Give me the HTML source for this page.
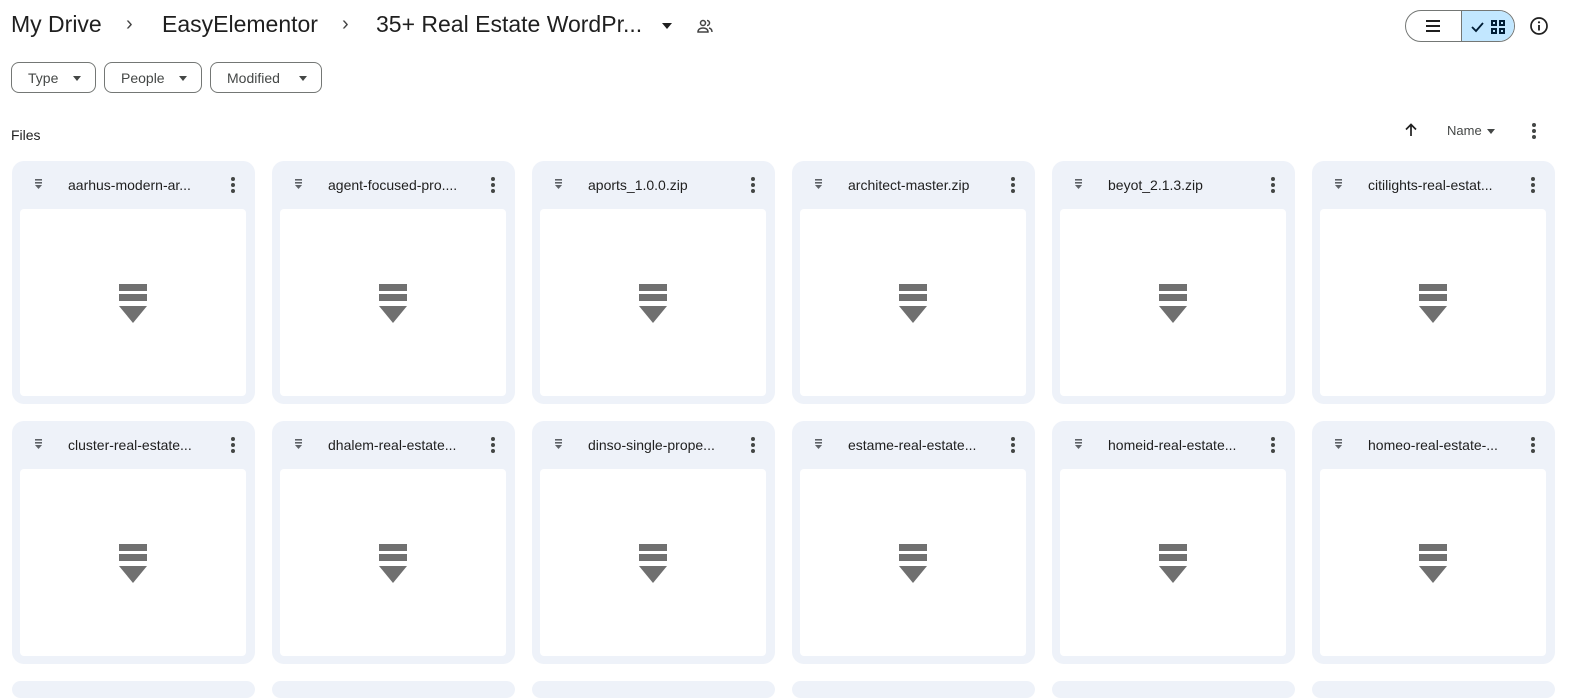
<!DOCTYPE html>
<html><head><meta charset="utf-8"><style>
*{margin:0;padding:0;box-sizing:border-box}
html,body{width:1581px;height:698px;overflow:hidden}
body{background:#fff;font-family:"Liberation Sans",sans-serif;color:#1f1f1f;position:relative}
.abs{position:absolute}
.bc{position:absolute;top:11px;font-size:23px;color:#1f1f1f;white-space:nowrap}
.chip{position:absolute;top:62px;height:31px;border:1px solid #747775;border-radius:8px;font-size:14px;color:#444746;display:flex;align-items:center;padding-left:16px}
.chip:after{content:"";position:absolute;right:14px;top:13px;border:4px solid transparent;border-top:5px solid #444746}
.card{position:absolute;width:243px;height:243px;background:#eef2f9;border-radius:12px}
.card .t{position:absolute;left:56px;top:16px;font-size:14px;color:#1f1f1f;white-space:nowrap}
.card .s{position:absolute;left:23px;top:18px;width:7px}
.card .m{position:absolute;right:20px;top:16px;width:4px}
.card .w{position:absolute;left:8px;top:48px;width:226px;height:187px;background:#fff;border-radius:4px}
.dot{width:4px;height:4px;border-radius:50%;background:#444746;margin-bottom:2px}
</style></head><body>
<div class="bc" style="left:11px">My Drive</div>
<div class="bc" style="left:126px;font-size:20px;top:13px;color:#444">›</div>
<div class="bc" style="left:162px">EasyElementor</div>
<div class="bc" style="left:342px;font-size:20px;top:13px;color:#444">›</div>
<div class="bc" style="left:376px">35+ Real Estate WordPr...</div>
<div class="abs" style="left:662px;top:23px;border:5px solid transparent;border-top:6px solid #1f1f1f"></div>
<svg class="abs" style="left:696px;top:17px" width="18" height="18" viewBox="0 0 18 18" fill="none" stroke="#444" stroke-width="1.5"><circle cx="7" cy="6" r="2.5"/><path d="M2 15c0-3 2.5-4 5-4s5 1 5 4z"/><path d="M11 3.5a2.5 2.5 0 010 5M13 11c2 .5 3 1.5 3 4"/></svg>
<div class="abs" style="left:1405px;top:10px;width:110px;height:32px;border:1px solid #747775;border-radius:16px;overflow:hidden">
<div class="abs" style="left:55px;top:0;width:55px;height:32px;background:#c2e7ff;border-left:1px solid #747775"></div>
<div class="abs" style="left:20px;top:9px;width:14px;height:2px;background:#1f1f1f;box-shadow:0 5px 0 #1f1f1f,0 10px 0 #1f1f1f"></div>
<svg class="abs" style="left:64px;top:8px" width="40" height="16" viewBox="0 0 40 16"><path d="M2 8l4 4 7-8" stroke="#001d35" stroke-width="1.8" fill="none"/><g fill="none" stroke="#001d35" stroke-width="2"><rect x="22" y="2" width="4" height="4"/><rect x="30" y="2" width="4" height="4"/><rect x="22" y="10" width="4" height="4"/><rect x="30" y="10" width="4" height="4"/></g></svg>
</div>
<svg class="abs" style="left:1529px;top:16px" width="20" height="20" viewBox="0 0 20 20"><circle cx="10" cy="10" r="8" fill="none" stroke="#1f1f1f" stroke-width="1.7"/><rect x="9.1" y="9" width="1.8" height="5.5" fill="#1f1f1f"/><circle cx="10" cy="6.3" r="1.1" fill="#1f1f1f"/></svg>
<div class="chip" style="left:11px;width:85px">Type</div>
<div class="chip" style="left:104px;width:98px">People</div>
<div class="chip" style="left:210px;width:112px">Modified</div>
<div class="abs" style="left:11px;top:127px;font-size:14px">Files</div>
<svg class="abs" style="left:1403px;top:122px" width="16" height="16" viewBox="0 0 16 16"><path d="M8 14V3M3 7.5L8 2.5l5 5" stroke="#1f1f1f" stroke-width="1.7" fill="none"/></svg>
<div class="abs" style="left:1447px;top:123px;font-size:13px;color:#444746">Name</div>
<div class="abs" style="left:1487px;top:129px;border:4.5px solid transparent;border-top:5px solid #444746"></div>
<div class="abs" style="left:1532px;top:123px"><div class="dot"></div><div class="dot"></div><div class="dot"></div></div>
<div id="g"></div>
<script>
var n=["aarhus-modern-ar...","agent-focused-pro....","aports_1.0.0.zip","architect-master.zip","beyot_2.1.3.zip","citilights-real-estat...","cluster-real-estate...","dhalem-real-estate...","dinso-single-prope...","estame-real-estate...","homeid-real-estate...","homeo-real-estate-..."];
var h="";
for(var r=0;r<3;r++)for(var c=0;c<6;c++){var i=r*6+c;var x=12+c*260,y=161+r*260;
h+='<div class="card" style="left:'+x+'px;top:'+y+'px;'+(r==2?'height:17px':'')+'">'+(r==2?'':
'<svg class="s" height="10" viewBox="0 0 7 10"><rect width="7" height="1.6" fill="#5f6368"/><rect y="3" width="7" height="1.6" fill="#5f6368"/><path d="M0 6h7l-3.5 4z" fill="#5f6368"/></svg>'+
'<div class="t">'+(n[i]||"")+'</div><div class="m"><div class="dot"></div><div class="dot"></div><div class="dot"></div></div>'+
'<div class="w"><svg style="position:absolute;left:99px;top:75px" width="28" height="40" viewBox="0 0 28 40"><rect width="28" height="7" fill="#707070"/><rect y="10" width="28" height="7" fill="#707070"/><path d="M0 22h28L14 39z" fill="#707070"/></svg></div>')+'</div>';}
document.getElementById("g").innerHTML=h;
</script>
</body></html>
